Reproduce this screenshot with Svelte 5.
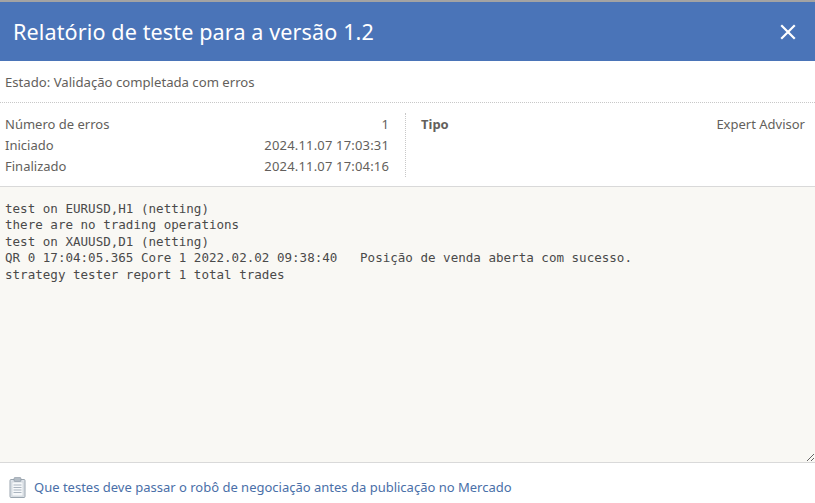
<script lang="ts">
	const left = [
		{ label: 'Número de erros', value: '1' },
		{ label: 'Iniciado', value: '2024.11.07 17:03:31' },
		{ label: 'Finalizado', value: '2024.11.07 17:04:16' }
	];

	const log = `test on EURUSD,H1 (netting)
there are no trading operations
test on XAUUSD,D1 (netting)
QR 0 17:04:05.365 Core 1 2022.02.02 09:38:40   Posição de venda aberta com sucesso.
strategy tester report 1 total trades`;
</script>

<div class="dialog">
	<header class="head">
		<h1>Relatório de teste para a versão 1.2</h1>
		<button class="close" aria-label="Fechar">
			<svg width="16" height="16" viewBox="0 0 16 16">
				<path d="M2 2 L14 14 M14 2 L2 14" stroke="#fff" stroke-width="2.2" stroke-linecap="square" fill="none" />
			</svg>
		</button>
	</header>

	<div class="status">Estado: Validação completada com erros</div>

	<section class="stats">
		<div class="col col-left">
			{#each left as row}
				<div class="row">
					<span>{row.label}</span>
					<span class="value">{row.value}</span>
				</div>
			{/each}
		</div>
		<div class="col col-right">
			<div class="row">
				<strong>Tipo</strong>
				<span>Expert Advisor</span>
			</div>
		</div>
	</section>

	<textarea class="log" readonly value={log}></textarea>

	<footer class="foot">
		<svg class="clip" width="17" height="21" viewBox="0 0 17 21">
			<rect x="1" y="2.5" width="15" height="18" rx="1" fill="#dfe4ea" stroke="#9aa5af" />
			<rect x="3" y="5" width="11" height="14" fill="#f6f8fa" stroke="#c3cad1" stroke-width="0.6" />
			<rect x="5" y="0.5" width="7" height="4" rx="1" fill="#b3bcc5" stroke="#8c97a2" stroke-width="0.6" />
			<path d="M4.5 8h8M4.5 10.5h8M4.5 13h8M4.5 15.5h8" stroke="#aab4bf" stroke-width="1" />
		</svg>
		<a href="#top">Que testes deve passar o robô de negociação antes da publicação no Mercado</a>
	</footer>
</div>

<style>
	:global(body) {
		margin: 0;
		background: #fff;
	}
	.dialog {
		width: 815px;
		height: 503px;
		display: flex;
		flex-direction: column;
		overflow: hidden;
		font-family: 'Noto Sans', 'Open Sans', sans-serif;
		font-size: 13px;
		color: #635f5c;
		border-top: 2px solid #a3a3a3;
		box-sizing: border-box;
	}
	.head {
		height: 59px;
		flex: none;
		display: flex;
		align-items: center;
		justify-content: space-between;
		padding: 0 19px 0 13px;
		background: #4a74b8;
		color: #fff;
	}
	h1 {
		margin: 0;
		font-size: 21.6px;
		font-weight: 400;
		letter-spacing: 0.1px;
	}
	.close {
		display: flex;
		padding: 0;
		border: 0;
		background: none;
	}
	.status {
		height: 42px;
		flex: none;
		display: flex;
		align-items: center;
		padding: 0 5px;
		box-sizing: border-box;
		border-bottom: 1px dotted #c8c8c8;
		font-size: 13.15px;
	}
	.stats {
		height: 84px;
		flex: none;
		display: flex;
		padding: 10px 0 9px;
		box-sizing: border-box;
		border-bottom: 1px solid #d9d9d9;
	}
	.col {
		display: flex;
		flex-direction: column;
		gap: 0;
	}
	.col-left {
		width: 406px;
		padding: 0 16px 0 5px;
		box-sizing: border-box;
		border-right: 1px dotted #c8c8c8;
	}
	.col-right {
		flex: 1;
		padding: 0 10px 0 15px;
	}
	.row {
		height: 21px;
		display: flex;
		align-items: center;
		justify-content: space-between;
	}
	.value {
		letter-spacing: 0.17px;
	}
	strong {
		font-weight: 700;
	}
	.log {
		flex: 1;
		display: block;
		width: 100%;
		min-height: 0;
		margin: 0;
		padding: 13.6px 5px 0;
		box-sizing: border-box;
		border: 0;
		border-bottom: 1px solid #d9d9d9;
		outline: 0;
		background: #f9f8f4;
		color: #4a4a4a;
		font-family: 'DejaVu Sans Mono', monospace;
		font-size: 12.55px;
		line-height: 16.5px;
		resize: vertical;
		white-space: pre;
		overflow: hidden;
	}
	.foot {
		height: 40px;
		flex: none;
		display: flex;
		align-items: center;
		gap: 8px;
		padding: 8px 0 0 9px;
		box-sizing: border-box;
	}
	.clip {
		flex: none;
	}
	a {
		color: #4a6fa8;
		text-decoration: none;
	}
</style>
